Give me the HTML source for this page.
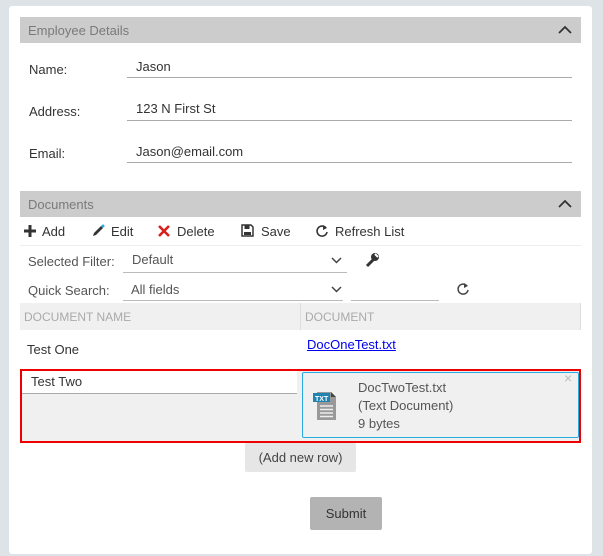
<!DOCTYPE html>
<html><head><style>
*{box-sizing:border-box;margin:0;padding:0}
body{width:603px;height:556px;background:#dde3e6;font-family:"Liberation Sans",sans-serif;position:relative;overflow:hidden;color:#333}
.a{position:absolute}
.card{left:9px;top:6px;width:583px;height:548px;background:#fff;border-radius:3px}
.hdr{left:20px;width:561px;height:26px;background:#cccccc;color:#7a7a7a;font-size:13px;padding:6px 8px}
.hdr svg{position:absolute;right:9px;top:8px}
.lbl{font-size:13px;color:#333}
.ul{height:1px;background:#aaa}
.t{font-size:13px;color:#333}
</style></head><body>
<div class="a card"></div>
<div class="a hdr" style="top:17px">Employee Details<svg width="14" height="9"><path d="M1 8L7 2L13 8" stroke="#333" stroke-width="1.8" fill="none"/></svg></div>
<div class="a lbl" style="left:29px;top:62px">Name:</div>
<div class="a t" style="left:136px;top:59px">Jason</div>
<div class="a ul" style="left:127px;top:77px;width:445px"></div>
<div class="a lbl" style="left:29px;top:104px">Address:</div>
<div class="a t" style="left:136px;top:101px">123 N First St</div>
<div class="a ul" style="left:127px;top:120px;width:445px"></div>
<div class="a lbl" style="left:29px;top:146px">Email:</div>
<div class="a t" style="left:136px;top:144px">Jason@email.com</div>
<div class="a ul" style="left:127px;top:162px;width:445px"></div>

<div class="a hdr" style="top:191px">Documents<svg width="14" height="9"><path d="M1 8L7 2L13 8" stroke="#333" stroke-width="1.8" fill="none"/></svg></div>
<svg class="a" style="left:23px;top:224px" width="14" height="14"><path d="M7 1V13M1 7H13" stroke="#333" stroke-width="3"/></svg>
<div class="a t" style="left:42px;top:224px">Add</div>
<svg class="a" style="left:91px;top:224px" width="14" height="14"><path d="M2 12L3 9L10 2L12 4L5 11Z" fill="#333"/><circle cx="12" cy="2" r="1.5" fill="#29abe2"/></svg>
<div class="a t" style="left:111px;top:224px">Edit</div>
<svg class="a" style="left:157px;top:224px" width="14" height="14"><path d="M2 2L12 12M12 2L2 12" stroke="#d9201f" stroke-width="2.6"/></svg>
<div class="a t" style="left:177px;top:224px">Delete</div>
<svg class="a" style="left:241px;top:224px" width="13" height="13"><path d="M1 1H10L12 3V12H1Z" fill="none" stroke="#333" stroke-width="1.5"/><rect x="3.5" y="1" width="5" height="4" fill="#333"/><rect x="3" y="8" width="7" height="3" fill="#333"/></svg>
<div class="a t" style="left:261px;top:224px">Save</div>
<svg class="a" style="left:315px;top:224px" width="14" height="14"><path d="M11 4A5 5 0 1 0 12 8" fill="none" stroke="#333" stroke-width="1.6"/><path d="M8 1L12 4L8 6Z" fill="#333"/></svg>
<div class="a t" style="left:335px;top:224px">Refresh List</div>
<div class="a" style="left:20px;top:245px;width:561px;height:1px;background:#eee"></div>

<div class="a t" style="left:28px;top:254px;color:#555">Selected Filter:</div>
<div class="a t" style="left:132px;top:252px;color:#555">Default</div>
<svg class="a" style="left:331px;top:256px" width="11" height="8"><path d="M1 2L5.5 6.5L10 2" stroke="#444" stroke-width="1.5" fill="none"/></svg>
<div class="a ul" style="left:123px;top:272px;width:224px;background:#bbb"></div>
<svg class="a" style="left:364px;top:252px" width="16" height="16"><path d="M3 14L9 8" stroke="#333" stroke-width="3"/><circle cx="11" cy="5" r="4" fill="#333"/><path d="M11 2L14 5" stroke="#fff" stroke-width="2"/></svg>

<div class="a t" style="left:28px;top:283px;color:#555">Quick Search:</div>
<div class="a t" style="left:131px;top:282px;color:#555">All fields</div>
<svg class="a" style="left:331px;top:285px" width="11" height="8"><path d="M1 2L5.5 6.5L10 2" stroke="#444" stroke-width="1.5" fill="none"/></svg>
<div class="a ul" style="left:123px;top:300px;width:220px;background:#bbb"></div>
<div class="a ul" style="left:351px;top:300px;width:88px;background:#bbb"></div>
<svg class="a" style="left:456px;top:282px" width="14" height="14"><path d="M11 4A5 5 0 1 0 12 8" fill="none" stroke="#444" stroke-width="1.5"/><path d="M8 1L12 4L8 6Z" fill="#444"/></svg>

<div class="a" style="left:20px;top:303px;width:561px;height:27px;background:#f0f0f0;border-right:1px solid #ddd"></div>
<div class="a" style="left:300px;top:303px;width:1px;height:27px;background:#ddd"></div>
<div class="a" style="left:24px;top:310px;font-size:12px;color:#aaa">DOCUMENT NAME</div>
<div class="a" style="left:305px;top:310px;font-size:12px;color:#aaa">DOCUMENT</div>
<div class="a t" style="left:27px;top:342px">Test One</div>
<div class="a t" style="left:307px;top:337px;color:#00e;text-decoration:underline">DocOneTest.txt</div>

<div class="a" style="left:20px;top:369px;width:561px;height:74px;border:2px solid #e00;background:#f0f0f0"></div>
<div class="a" style="left:22px;top:371px;width:275px;height:23px;background:#fff;border-bottom:1px solid #aaa"></div>
<div class="a t" style="left:31px;top:374px">Test Two</div>
<div class="a" style="left:302px;top:372px;width:277px;height:66px;border:1px solid #29abe2;background:#f0f0f0;border-radius:2px"></div>
<svg class="a" style="left:312px;top:391px" width="26" height="30"><path d="M5 1H19L24 6V29H5Z" fill="#999"/><path d="M19 1L24 6H19Z" fill="#444"/><rect x="1" y="2" width="17" height="9" fill="#1f84b1"/><text x="3" y="10" font-size="7" font-weight="bold" fill="#fff" font-family="Liberation Sans">TXT</text><path d="M8 15H21M8 18.5H21M8 22H21M8 25.5H21" stroke="#eee" stroke-width="1.5"/></svg>
<div class="a t" style="left:358px;top:379px;color:#555;line-height:18px">DocTwoTest.txt<br>(Text Document)<br>9 bytes</div>
<div class="a" style="left:564px;top:370px;color:#bbb;font-size:14px">×</div>

<div class="a" style="left:245px;top:443px;width:111px;height:29px;background:#e6e6e6;border-radius:2px;font-size:13px;color:#444;text-align:center;line-height:29px">(Add new row)</div>
<div class="a" style="left:310px;top:497px;width:72px;height:33px;background:#b3b3b3;border-radius:2px;font-size:13px;color:#333;text-align:center;line-height:33px">Submit</div>
</body></html>
